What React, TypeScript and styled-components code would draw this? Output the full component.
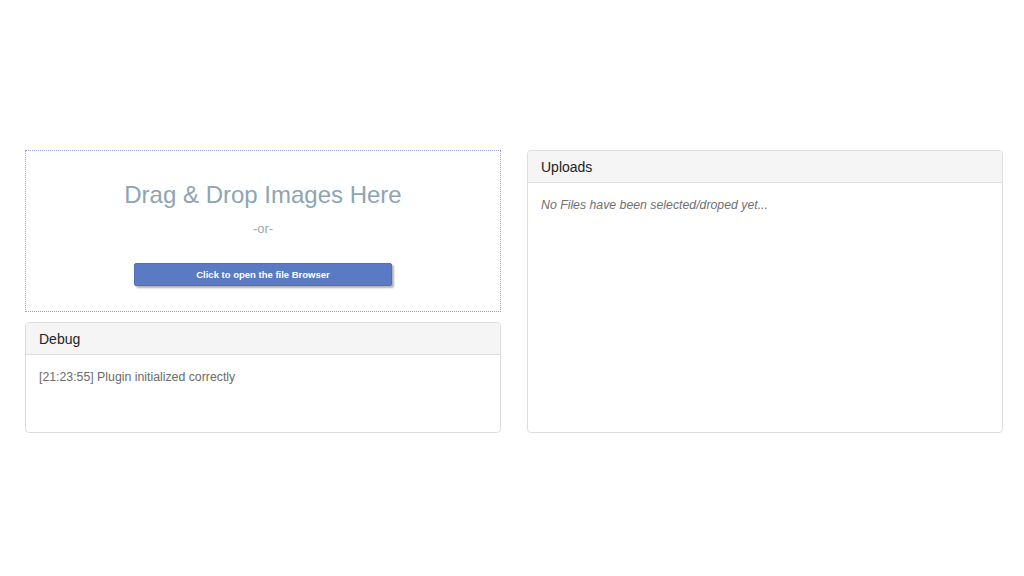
import styled, { createGlobalStyle } from 'styled-components';

const GlobalStyle = createGlobalStyle`
  body {
    margin: 0;
    background: #ffffff;
    font-family: 'Liberation Sans', Arial, sans-serif;
  }
`;

const Page = styled.div`
  display: grid;
  grid-template-columns: 476px 476px;
  column-gap: 26px;
  padding: 150px 0 0 25px;
  align-items: start;
`;

const Column = styled.div`
  display: flex;
  flex-direction: column;
  gap: 10px;
`;

const DropZone = styled.div`
  height: 162px;
  box-sizing: border-box;
  border: 1px dotted #9c9cd6;
  display: flex;
  flex-direction: column;
  align-items: center;
  padding-top: 29px;
`;

const DropTitle = styled.h2`
  margin: 0;
  font-size: 24px;
  font-weight: normal;
  color: #8ea5b1;
  line-height: 29px;
`;

const OrText = styled.div`
  margin-top: 12px;
  font-size: 13px;
  color: #a5a5a5;
  line-height: 16px;
`;

const BrowseButton = styled.button`
  margin-top: 26px;
  width: 258px;
  height: 23px;
  border: 1px solid #4f6fb8;
  border-radius: 2px;
  background: #5a7ac4;
  color: #ffffff;
  font-family: 'Liberation Sans', Arial, sans-serif;
  font-size: 9.5px;
  font-weight: bold;
  box-shadow: 2px 2px 2px rgba(0, 0, 0, 0.3);
  cursor: pointer;
`;

const Panel = styled.div<{ $height: number }>`
  height: ${(props) => props.$height}px;
  box-sizing: border-box;
  border: 1px solid #dddddd;
  border-radius: 4px;
  overflow: hidden;
  display: flex;
  flex-direction: column;
  box-shadow: 0 1px 1px rgba(0, 0, 0, 0.03);
`;

const PanelHeader = styled.div`
  height: 32px;
  box-sizing: border-box;
  background: #f5f5f5;
  border-bottom: 1px solid #dddddd;
  padding: 0 13px;
  display: flex;
  align-items: center;
  font-size: 14px;
  color: #222222;
`;

const PanelBody = styled.div`
  padding: 15px 13px;
  font-size: 12.3px;
  line-height: 14px;
  color: #6b6b6b;
`;

const Placeholder = styled.div`
  font-style: italic;
  color: #707070;
`;

export default function App() {
  return (
    <>
      <GlobalStyle />
      <Page>
        <Column>
          <DropZone>
            <DropTitle>Drag &amp; Drop Images Here</DropTitle>
            <OrText>-or-</OrText>
            <BrowseButton>Click to open the file Browser</BrowseButton>
          </DropZone>
          <Panel $height={111}>
            <PanelHeader>Debug</PanelHeader>
            <PanelBody>[21:23:55] Plugin initialized correctly</PanelBody>
          </Panel>
        </Column>
        <Panel $height={283}>
          <PanelHeader>Uploads</PanelHeader>
          <PanelBody>
            <Placeholder>No Files have been selected/droped yet...</Placeholder>
          </PanelBody>
        </Panel>
      </Page>
    </>
  );
}
